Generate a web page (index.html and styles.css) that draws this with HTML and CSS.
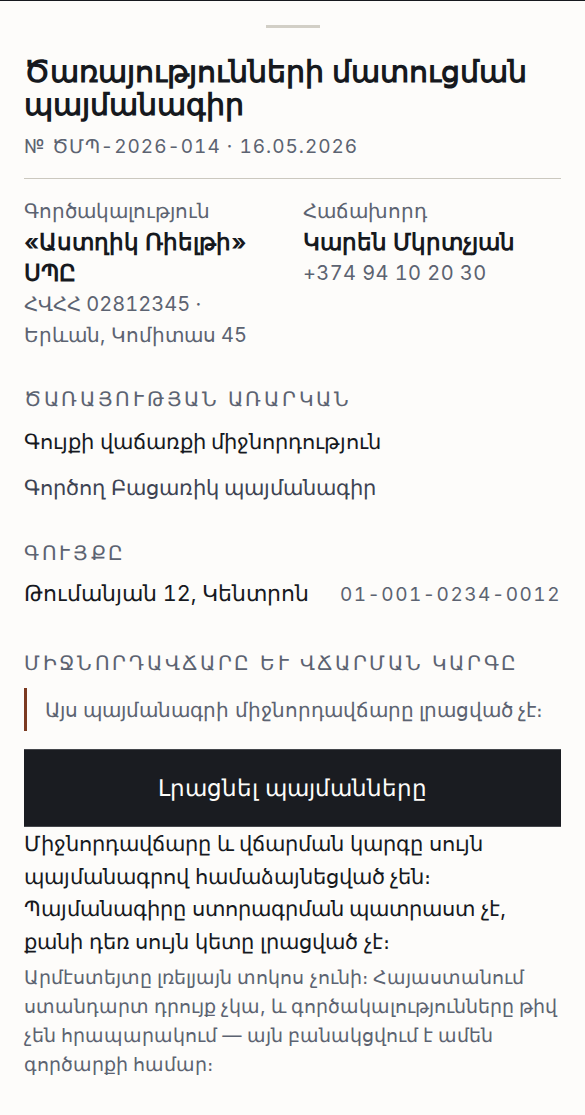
FILE: index.html
```html
<!DOCTYPE html>
<html lang="hy">
<head>
<meta charset="utf-8">
<title>Ծառայությունների մատուցման պայմանագիր</title>
<link rel="stylesheet" href="styles.css">
</head>
<body>
<div class="sheet">
  <div class="handle"></div>
  <header class="head">
    <h1 class="title">Ծառայությունների մատուցման պայմանագիր</h1>
    <div class="doc-no">№ ԾՄՊ-2026-014 · 16.05.2026</div>
  </header>

  <section class="parties">
    <div class="party">
      <div class="party-label">Գործակալություն</div>
      <div class="party-name">«Աստղիկ Ռիելթի» ՍՊԸ</div>
      <div class="party-meta">ՀՎՀՀ 02812345 · <span class="nowrap">Երևան, Կոմիտաս 45</span></div>
    </div>
    <div class="party">
      <div class="party-label">Հաճախորդ</div>
      <div class="party-name">Կարեն Մկրտչյան</div>
      <div class="party-meta phone">+374 94 10 20 30</div>
    </div>
  </section>

  <section class="block block-subject">
    <h2 class="block-title">Ծառայության առարկան</h2>
    <p class="subject">Գույքի վաճառքի միջնորդություն</p>
    <p class="status">Գործող Բացառիկ պայմանագիր</p>
  </section>

  <section class="block block-property">
    <h2 class="block-title">Գույքը</h2>
    <div class="property">
      <span class="address">Թումանյան 12, Կենտրոն</span>
      <span class="cadastre">01-001-0234-0012</span>
    </div>
  </section>

  <section class="block block-fee">
    <h2 class="block-title">Միջնորդավճարը եւ վճարման կարգը</h2>
    <div class="notice">Այս պայմանագրի միջնորդավճարը լրացված չէ։</div>
    <button class="fill-btn" type="button">Լրացնել պայմանները</button>
    <p class="warning">Միջնորդավճարը և վճարման կարգը սույն պայմանագրով համաձայնեցված չեն։ Պայմանագիրը ստորագրման պատրաստ չէ, քանի դեռ սույն կետը լրացված չէ։</p>
    <p class="hint">Արմէստեյտը լռելյայն տոկոս չունի։ Հայաստանում ստանդարտ դրույք չկա, և գործակալությունները թիվ չեն հրապարակում — այն բանակցվում է ամեն գործարքի համար։</p>
  </section>
</div>
</body>
</html>
```

FILE: styles.css
```css
html, body {
  margin: 0;
  padding: 0;
}

body {
  background: #fdfcfa;
  color: #16191e;
  font-family: "Inter", "Noto Sans", sans-serif;
  font-variant-numeric: tabular-nums;
  border-top: 1px solid #16191e;
}

.sheet {
  padding: 0 24px 40px;
}

/* drag handle of the sheet */
.handle {
  width: 54px;
  height: 3px;
  background: #d2cfc6;
  margin: 24px auto 0;
}

.head {
  padding: 27px 0 19px;
  border-bottom: 1px solid #cbc8bf;
}

.title {
  margin: 0;
  font-size: 29.6px;
  line-height: 33px;
  font-weight: 700;
}

.doc-no {
  margin-top: 14px;
  font-size: 19px;
  line-height: 24px;
  letter-spacing: 1px;
  color: #5c6371;
}

/* agency / client columns */
.parties {
  display: grid;
  grid-template-columns: 1fr 1fr;
  column-gap: 21px;
  padding-top: 19px;
}

.party-label {
  font-size: 20px;
  line-height: 26px;
  color: #5c6371;
}

.party-name {
  margin-top: 3px;
  font-size: 23px;
  line-height: 31px;
  font-weight: 700;
}

.party-meta {
  font-size: 20px;
  line-height: 31px;
  color: #5c6371;
}

.party-meta.phone {
  letter-spacing: 0.4px;
}

.nowrap {
  white-space: nowrap;
}

.block-title {
  margin: 0;
  font-size: 20px;
  line-height: 26px;
  font-weight: 400;
  text-transform: uppercase;
  letter-spacing: 2.7px;
  color: #5c6371;
}

.block-subject {
  margin-top: 35px;
}

.block-property {
  margin-top: 39px;
}

.block-fee {
  margin-top: 41px;
}

.subject {
  margin: 15px 0 0;
  font-size: 21.2px;
  line-height: 28px;
}

.status {
  margin: 18px 0 0;
  font-size: 21.2px;
  line-height: 28px;
  color: #3d4352;
}

.property {
  display: flex;
  justify-content: space-between;
  align-items: baseline;
  gap: 12px;
  margin-top: 13px;
  line-height: 28px;
}

.address {
  font-size: 21.6px;
}

.cadastre {
  font-size: 19px;
  letter-spacing: 1.5px;
  color: #5c6371;
}

.notice {
  margin-top: 12px;
  padding: 9px 0 7px 18px;
  border-left: 3px solid #7b3a21;
  font-size: 19.75px;
  line-height: 27px;
  color: #5c6371;
}

.fill-btn {
  display: block;
  width: 100%;
  height: 78px;
  margin-top: 18px;
  padding: 0;
  background: #1a1c21;
  color: #fdfcfa;
  border: 0;
  border-top: 1px solid #45474c;
  border-bottom: 1px solid #45474c;
  font-family: inherit;
  font-size: 23px;
  font-weight: 400;
  cursor: pointer;
}

.warning {
  margin: 0;
  font-size: 21.4px;
  line-height: 32.7px;
}

.hint {
  margin: 5px 0 0;
  font-size: 19.3px;
  line-height: 29px;
  color: #5c6371;
}
```
